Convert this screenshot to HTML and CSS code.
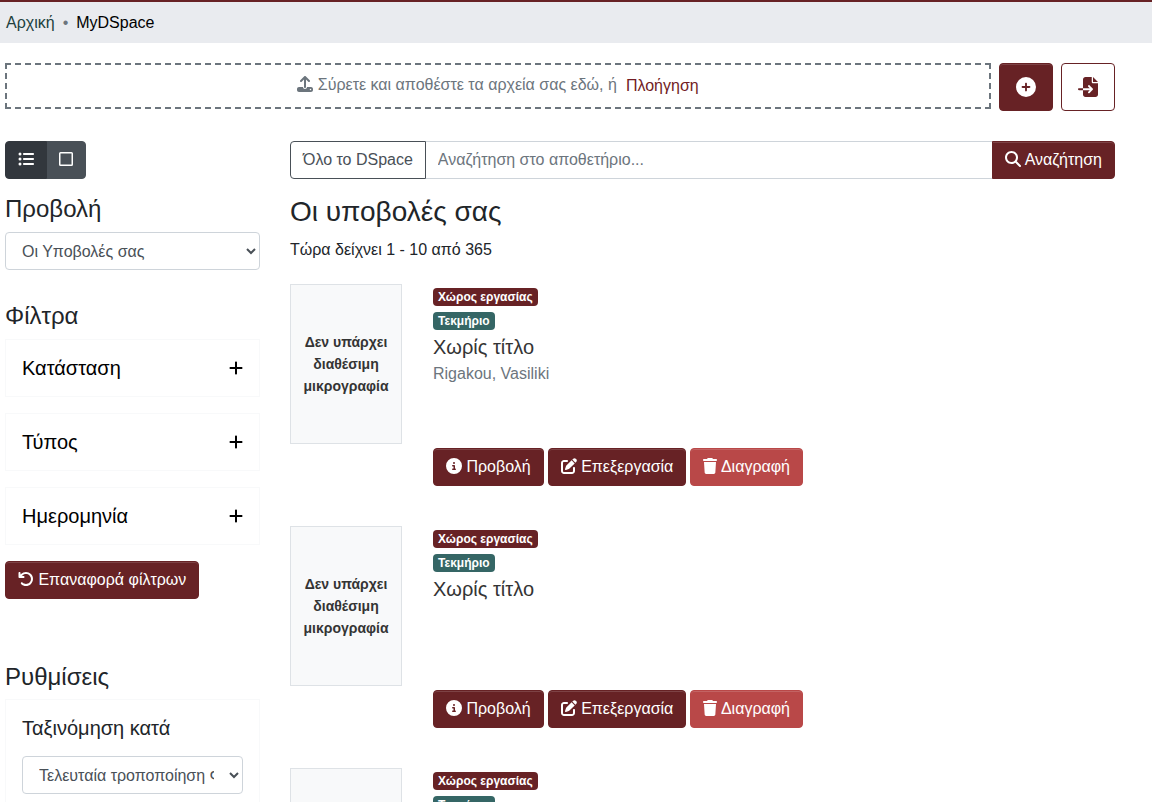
FILE: index.html
```html
<!DOCTYPE html>
<html lang="el">
<head>
<meta charset="utf-8">
<title>MyDSpace</title>
<meta name="viewport" content="width=device-width, initial-scale=1">
<link rel="stylesheet" href="styles.css">
</head>
<body>
<svg class="sprite" aria-hidden="true">
  <symbol id="upload" viewBox="0 0 512 512"><path d="M288 109.3V352c0 17.700-14.300 32-32 32s-32-14.300-32-32V109.300l-73.400 73.400c-12.500 12.500-32.800 12.500-45.300 0s-12.500-32.800 0-45.300l128-128c12.500-12.500 32.800-12.500 45.300 0l128 128c12.500 12.500 12.500 32.800 0 45.300s-32.800 12.500-45.300 0L288 109.300zM64 352H192c0 35.300 28.700 64 64 64s64-28.700 64-64H448c35.300 0 64 28.700 64 64v32c0 35.300-28.700 64-64 64H64c-35.300 0-64-28.700-64-64V416c0-35.300 28.700-64 64-64zM432 456a24 24 0 1 0 0-48 24 24 0 1 0 0 48z"/></symbol>
  <symbol id="circle-plus" viewBox="0 0 512 512"><path d="M256 512A256 256 0 1 0 256 0a256 256 0 1 0 0 512zM232 344V280H168c-13.300 0-24-10.700-24-24s10.700-24 24-24h64V168c0-13.300 10.700-24 24-24s24 10.700 24 24v64h64c13.300 0 24 10.700 24 24s-10.700 24-24 24H280v64c0 13.300-10.700 24-24 24s-24-10.700-24-24z"/></symbol>
  <symbol id="file-import" viewBox="0 0 512 512"><path d="M128 64c0-35.300 28.700-64 64-64H352V128c0 17.700 14.300 32 32 32H512V448c0 35.300-28.700 64-64 64H192c-35.300 0-64-28.700-64-64V336H302.100l-39 39c-9.400 9.400-9.400 24.600 0 33.900s24.600 9.400 33.900 0l80-80c9.400-9.400 9.400-24.600 0-33.900l-80-80c-9.400-9.400-24.600-9.400-33.900 0s-9.400 24.600 0 33.900l39 39H128V64zm0 224v48H24c-13.300 0-24-10.700-24-24s10.700-24 24-24H128zM512 128H384V0L512 128z"/></symbol>
  <symbol id="list" viewBox="0 0 512 512"><path d="M64 144a48 48 0 1 0 0-96 48 48 0 1 0 0 96zM192 64c-17.700 0-32 14.300-32 32s14.300 32 32 32H480c17.700 0 32-14.300 32-32s-14.300-32-32-32H192zm0 160c-17.700 0-32 14.300-32 32s14.300 32 32 32H480c17.700 0 32-14.300 32-32s-14.300-32-32-32H192zm0 160c-17.700 0-32 14.300-32 32s14.300 32 32 32H480c17.700 0 32-14.300 32-32s-14.300-32-32-32H192zM64 464a48 48 0 1 0 0-96 48 48 0 1 0 0 96zm48-208a48 48 0 1 0-96 0 48 48 0 1 0 96 0z"/></symbol>
  <symbol id="square" viewBox="0 0 448 512"><path fill-rule="evenodd" d="M48 32h352a48 48 0 0 1 48 48v352a48 48 0 0 1-48 48H48a48 48 0 0 1-48-48V80a48 48 0 0 1 48-48zm0 48v352h352V80z"/></symbol>
  <symbol id="search" viewBox="0 0 512 512"><path d="M416 208c0 45.900-14.900 88.300-40 122.700L502.600 457.400c12.500 12.500 12.500 32.800 0 45.300s-32.800 12.500-45.300 0L330.700 376c-34.400 25.200-76.800 40-122.700 40C93.100 416 0 322.900 0 208S93.100 0 208 0S416 93.100 416 208zM208 352a144 144 0 1 0 0-288 144 144 0 1 0 0 288z"/></symbol>
  <symbol id="info" viewBox="0 0 512 512"><path d="M256 512A256 256 0 1 0 256 0a256 256 0 1 0 0 512zM216 336h24V272H216c-13.300 0-24-10.700-24-24s10.700-24 24-24h48c13.300 0 24 10.700 24 24v88h8c13.300 0 24 10.700 24 24s-10.700 24-24 24H216c-13.300 0-24-10.700-24-24s10.700-24 24-24zm40-208a32 32 0 1 1 0 64 32 32 0 1 1 0-64z"/></symbol>
  <symbol id="edit" viewBox="0 0 512 512"><path d="M471.600 21.700c-21.900-21.900-57.300-21.900-79.200 0L362.300 51.700l97.900 97.900 30.100-30.100c21.900-21.900 21.900-57.300 0-79.200L471.600 21.700zm-299.200 220c-6.100 6.100-10.800 13.600-13.500 21.900l-29.600 88.800c-2.900 8.600-.6 18.100 5.800 24.600s15.900 8.700 24.600 5.800l88.800-29.600c8.200-2.700 15.700-7.400 21.900-13.500L437.700 172.300 339.700 74.300 172.400 241.700zM96 64C43 64 0 107 0 160V416c0 53 43 96 96 96H352c53 0 96-43 96-96V320c0-17.700-14.300-32-32-32s-32 14.300-32 32v96c0 17.700-14.300 32-32 32H96c-17.700 0-32-14.300-32-32V160c0-17.700 14.300-32 32-32h96c17.700 0 32-14.300 32-32s-14.300-32-32-32H96z"/></symbol>
  <symbol id="trash" viewBox="0 0 448 512"><path d="M135.200 17.700L128 32H32C14.300 32 0 46.300 0 64S14.300 96 32 96H416c17.700 0 32-14.300 32-32s-14.300-32-32-32H320l-7.200-14.300C307.400 6.800 296.300 0 284.200 0H163.800c-12.100 0-23.200 6.800-28.600 17.700zM416 128H32L53.200 467c1.600 25.300 22.600 45 47.900 45H346.900c25.300 0 46.300-19.700 47.900-45L416 128z"/></symbol>
  <symbol id="undo" viewBox="0 0 512 512"><path d="M125.700 160H176c17.700 0 32 14.300 32 32s-14.300 32-32 32H48c-17.700 0-32-14.300-32-32V64c0-17.700 14.300-32 32-32s32 14.300 32 32v51.200L97.600 97.600c87.500-87.500 229.300-87.500 316.800 0s87.500 229.300 0 316.800s-229.300 87.500-316.800 0c-12.500-12.500-12.500-32.800 0-45.300s32.800-12.500 45.300 0c62.500 62.500 163.800 62.500 226.300 0s62.500-163.800 0-226.300s-163.800-62.500-226.300 0L125.700 160z"/></symbol>
  <symbol id="plus" viewBox="0 0 448 512"><path d="M256 80c0-17.700-14.300-32-32-32s-32 14.300-32 32V224H48c-17.700 0-32 14.300-32 32s14.300 32 32 32H192V432c0 17.700 14.300 32 32 32s32-14.300 32-32V288H400c17.700 0 32-14.300 32-32s-14.300-32-32-32H256V80z"/></symbol>
</svg>

<div class="shell">
  <nav class="breadcrumbs" aria-label="breadcrumb">
    <ol class="crumbs">
      <li><a class="crumb-link" href="#">Αρχική</a></li>
      <li class="crumb-current" aria-current="page">MyDSpace</li>
    </ol>
  </nav>

  <div class="container">
    <div class="upload-row">
      <div class="dropzone">
        <span class="drop-text"><svg class="icon"><use href="#upload"/></svg> Σύρετε και αποθέστε τα αρχεία σας εδώ, ή</span>
        <label class="browse" for="file">Πλοήγηση</label>
        <input class="file-input" id="file" type="file">
      </div>
      <button class="btn btn-primary btn-square" type="button" aria-label="Νέα υποβολή"><svg class="icon icon-lg"><use href="#circle-plus"/></svg></button>
      <button class="btn btn-outline btn-square" type="button" aria-label="Εισαγωγή"><svg class="icon icon-lg"><use href="#file-import"/></svg></button>
    </div>

    <div class="columns">
      <aside class="sidebar">
        <div class="toggle">
          <button class="toggle-btn toggle-active" type="button" aria-label="Λίστα"><svg class="icon"><use href="#list"/></svg></button>
          <button class="toggle-btn" type="button" aria-label="Λεπτομέρειες"><svg class="icon icon-narrow"><use href="#square"/></svg></button>
        </div>

        <h2 class="side-title"><label for="view">Προβολή</label></h2>
        <select class="select" id="view"><option>Οι Υποβολές σας</option></select>

        <h2 class="side-title filters-title">Φίλτρα</h2>
        <div class="filters">
          <button class="filter" type="button">Κατάσταση <svg class="icon icon-narrow"><use href="#plus"/></svg></button>
          <button class="filter" type="button">Τύπος <svg class="icon icon-narrow"><use href="#plus"/></svg></button>
          <button class="filter" type="button">Ημερομηνία <svg class="icon icon-narrow"><use href="#plus"/></svg></button>
        </div>
        <button class="btn btn-primary" type="button"><svg class="icon"><use href="#undo"/></svg> Επαναφορά φίλτρων</button>

        <h2 class="side-title settings-title">Ρυθμίσεις</h2>
        <div class="card">
          <h3 class="card-title"><label for="sort">Ταξινόμηση κατά</label></h3>
          <select class="select" id="sort"><option>Τελευταία τροποποίηση Φθίνουσα</option></select>
        </div>
      </aside>

      <main class="main">
        <form class="search">
          <button class="btn btn-scope" type="button">Όλο το DSpace</button>
          <input class="search-input" type="text" aria-label="Αναζήτηση" placeholder="Αναζήτηση στο αποθετήριο...">
          <button class="btn btn-primary btn-search" type="button"><svg class="icon"><use href="#search"/></svg> Αναζήτηση</button>
        </form>
        <h1 class="page-title">Οι υποβολές σας</h1>
        <p class="showing">Τώρα δείχνει 1 - 10 από 365</p>

        <ul class="items">
          <li class="item">
            <div class="thumb">Δεν υπάρχει διαθέσιμη μικρογραφία</div>
            <div class="item-body">
              <div class="badge-line"><span class="badge badge-primary">Χώρος εργασίας</span></div>
              <div class="badge-line"><span class="badge badge-teal">Τεκμήριο</span></div>
              <h3 class="item-title">Χωρίς τίτλο</h3>
              <p class="author">Rigakou, Vasiliki</p>
            </div>
            <div class="actions">
              <button class="btn btn-primary" type="button"><svg class="icon"><use href="#info"/></svg> Προβολή</button>
              <button class="btn btn-primary" type="button"><svg class="icon"><use href="#edit"/></svg> Επεξεργασία</button>
              <button class="btn btn-danger" type="button"><svg class="icon icon-narrow"><use href="#trash"/></svg> Διαγραφή</button>
            </div>
          </li>
          <li class="item">
            <div class="thumb">Δεν υπάρχει διαθέσιμη μικρογραφία</div>
            <div class="item-body">
              <div class="badge-line"><span class="badge badge-primary">Χώρος εργασίας</span></div>
              <div class="badge-line"><span class="badge badge-teal">Τεκμήριο</span></div>
              <h3 class="item-title">Χωρίς τίτλο</h3>
            </div>
            <div class="actions">
              <button class="btn btn-primary" type="button"><svg class="icon"><use href="#info"/></svg> Προβολή</button>
              <button class="btn btn-primary" type="button"><svg class="icon"><use href="#edit"/></svg> Επεξεργασία</button>
              <button class="btn btn-danger" type="button"><svg class="icon icon-narrow"><use href="#trash"/></svg> Διαγραφή</button>
            </div>
          </li>
          <li class="item">
            <div class="thumb"></div>
            <div class="item-body">
              <div class="badge-line"><span class="badge badge-primary">Χώρος εργασίας</span></div>
              <div class="badge-line"><span class="badge badge-teal">Τεκμήριο</span></div>
            </div>
          </li>
        </ul>
      </main>
    </div>
  </div>
</div>
</body>
</html>
```

FILE: styles.css
```css
:root {
  --primary: #672225;
  --teal: #356665;
  --danger: #b94848;
  --text: #212529;
  --muted: #6c757d;
  --slate: #495057;
  --line: #ced4da;
}

*, *::before, *::after { box-sizing: border-box; }

body {
  margin: 0;
  font-family: "Liberation Sans", Arial, sans-serif;
  font-size: 16px;
  line-height: 24px;
  color: var(--text);
  background: #fff;
}

h1, h2, h3, p, ol, ul { margin: 0; padding: 0; font-weight: 400; list-style: none; }
button, input, select { font: inherit; }
button { cursor: pointer; }

.sprite { position: absolute; width: 0; height: 0; }
.shell { height: 100vh; overflow: hidden; }

.breadcrumbs {
  padding: 9px 6px 8px;
  border-top: 2px solid var(--primary);
  background: #e9ebef;
}
.crumbs { display: flex; }
.crumb-link { color: #20403d; text-decoration: none; }
.crumb-current { color: #000; }
.crumb-current::before { content: "•"; padding: 0 8px; color: var(--muted); }

.container { padding: 20px 37px 0 5px; }

.icon { width: 16px; height: 16px; fill: currentColor; vertical-align: -2px; }
.icon-narrow { width: 14px; }
.icon-lg { width: 20px; height: 20px; }

.btn {
  padding: 6px 12px;
  border: 1px solid var(--primary);
  border-radius: 4px;
  line-height: 24px;
  white-space: nowrap;
}
.btn-primary { background: var(--primary); color: #fff; box-shadow: inset 0 1px 0 rgba(255, 255, 255, .15); }
.btn-danger { background: var(--danger); border-color: var(--danger); color: #fff; box-shadow: inset 0 1px 0 rgba(255, 255, 255, .15); }
.btn-outline { background: #fff; color: var(--primary); }
.btn-square {
  display: flex;
  align-items: center;
  justify-content: center;
  width: 54px;
  height: 48px;
}

.upload-row { display: flex; align-items: flex-start; gap: 8px; margin-bottom: 30px; }
.dropzone {
  flex: 1;
  display: flex;
  justify-content: center;
  gap: 9px;
  padding: 8px 0 10px;
  border: 2px dashed var(--muted);
}
.drop-text { color: var(--muted); }
.browse { padding-top: 1px; margin-bottom: -1px; color: #721c24; cursor: pointer; }
.file-input { display: none; }

.columns { display: grid; grid-template-columns: 255px 1fr; gap: 30px; }

.toggle { display: flex; margin-bottom: 16px; }
.toggle-btn {
  margin-left: -1px;
  padding: 6px 12px;
  border: 1px solid var(--slate);
  border-radius: 0 4px 4px 0;
  line-height: 24px;
  background: var(--slate);
  color: #fff;
}
.toggle-active {
  z-index: 1;
  margin-left: 0;
  border-color: #32373d;
  border-radius: 4px 0 0 4px;
  background: #32373d;
}

.side-title { margin-bottom: 10px; font-size: 24px; line-height: 27px; }
.filters-title { margin-top: 32px; }
.settings-title { margin-top: 64px; margin-bottom: 9px; }

.select {
  display: block;
  width: 100%;
  height: 38px;
  padding: 6px 12px;
  border: 1px solid var(--line);
  border-radius: 4px;
  background: #fff;
  color: var(--slate);
}

.filters { display: grid; gap: 16px; margin-bottom: 16px; }
.filter {
  display: flex;
  align-items: center;
  justify-content: space-between;
  padding: 16px;
  border: 1px solid #f8f9fa;
  background: #fff;
  color: #000;
  font-size: 20px;
  line-height: 24px;
}
.card { padding: 16px; border: 1px solid #f8f9fa; }
.card-title { margin-bottom: 16px; font-size: 20px; line-height: 24px; }

.search { display: flex; margin-bottom: 16px; }
.btn-scope { border-color: var(--slate); border-radius: 4px 0 0 4px; background: #fff; color: var(--slate); }
.search-input {
  flex: 1;
  min-width: 0;
  padding: 6px 12px;
  border: solid var(--line);
  border-width: 1px 0;
  color: var(--slate);
}
.search-input::placeholder { color: var(--muted); opacity: 1; }
.btn-search { border-radius: 0 4px 4px 0; }

.page-title { margin-bottom: 9px; font-size: 28px; line-height: 34px; }
.showing { margin-bottom: 22px; }

.items { display: grid; gap: 40px; }
.item {
  display: grid;
  grid-template-columns: 112px 1fr;
  column-gap: 31px;
  row-gap: 4px;
}
.thumb {
  display: flex;
  align-items: center;
  height: 160px;
  padding: 0 8px;
  border: 1px solid #dee2e6;
  background: #f8f9fa;
  color: #343434;
  font-size: 14px;
  font-weight: 700;
  line-height: 22px;
  text-align: center;
}
.badge-line { height: 24px; }
.badge {
  display: inline-block;
  padding: 3px 5px;
  border-radius: 4px;
  color: #fff;
  font-size: 12px;
  font-weight: 700;
  line-height: 12px;
}
.badge-primary { background: var(--primary); }
.badge-teal { background: var(--teal); }
.item-title { padding-top: 3px; color: #343434; font-size: 20px; line-height: 24px; }
.author { padding-top: 3px; color: var(--muted); }
.actions { grid-column: 2; display: flex; gap: 4px; }
```
